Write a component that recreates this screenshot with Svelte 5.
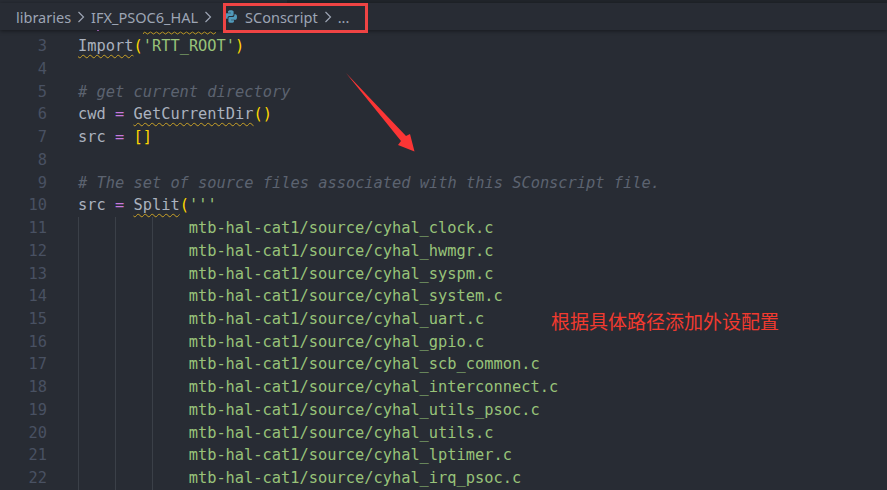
<script lang="ts">
  const cfiles = [
    'clock', 'hwmgr', 'syspm', 'system', 'uart', 'gpio', 'scb_common',
    'interconnect', 'utils_psoc', 'utils', 'lptimer', 'irq_psoc'
  ];

  const lines = [
    { n: 3, tokens: [['sq', 'Import'], ['br', '('], ['str', "'RTT_ROOT'"], ['br', ')']] },
    { n: 4, tokens: [] },
    { n: 5, tokens: [['com', '# get current directory']] },
    { n: 6, tokens: [['', 'cwd '], ['op', '='], ['', ' '], ['sq', 'GetCurrentDir'], ['br', '()']] },
    { n: 7, tokens: [['', 'src '], ['op', '='], ['', ' '], ['br', '[]']] },
    { n: 8, tokens: [] },
    { n: 9, tokens: [['com', '# The set of source files associated with this SConscript file.']] },
    { n: 10, tokens: [['', 'src '], ['op', '='], ['', ' '], ['sq', 'Split'], ['br', '('], ['str', "'''"]] },
    ...cfiles.map((f, i) => ({
      n: 11 + i,
      indent: 3,
      tokens: [['str', `mtb-hal-cat1/source/cyhal_${f}.c`]]
    }))
  ];

  // squiggle left over from the line hidden behind the breadcrumb bar
  let wave = 'M0 3';
  for (let x = 0; x < 73; x += 3) wave += ` L${x + 1.5} ${x % 6 === 0 ? 1 : 3}`;
</script>

<div class="window">
  <div class="tabs"><span class="tab-on"></span></div>
  <header class="crumbs">
    <span>libraries</span>
    <svg class="chev" viewBox="0 0 8 12"><path d="M1.5 1 L6.5 6 L1.5 11" /></svg>
    <span>IFX_PSOC6_HAL</span>
    <svg class="chev" viewBox="0 0 8 12"><path d="M1.5 1 L6.5 6 L1.5 11" /></svg>
    <svg class="py" viewBox="0 0 12 13">
      <path d="M3 3.2V1.8C3 .8 4 .3 5.8 .3S8.6 .8 8.6 1.8V4.6C8.6 5.5 8 6 7.1 6H4.4C3.3 6 2.6 6.7 2.6 7.8V8.7H1.6C.6 8.7 0 7.8 0 6.1S.6 3.2 1.6 3.2H5.9V2.7H3Z" />
      <path d="M9 9.8V11.2C9 12.2 8 12.7 6.2 12.7S3.4 12.2 3.4 11.2V8.4C3.4 7.5 4 7 4.9 7H7.6C8.7 7 9.4 6.3 9.4 5.2V4.3H10.4C11.4 4.3 12 5.2 12 6.9S11.4 9.8 10.4 9.8H6.1V10.3H9Z" />
    </svg>
    <span class="file">SConscript</span>
    <svg class="chev" viewBox="0 0 8 12"><path d="M1.5 1 L6.5 6 L1.5 11" /></svg>
    <span>...</span>
  </header>

  <div class="peek">
    <span class="tick"></span>
    <svg class="wave" viewBox="0 0 73 4"><path d={wave} /></svg>
  </div>

  <main class="code">
    {#each lines as line (line.n)}
      <div class="row">
        <span class="num">{line.n}</span>
        <span class="text">
          {#each { length: line.indent ?? 0 } as _}<span class="guide"></span>{/each}
          {#each line.tokens as [cls, t]}<span class={cls}>{t}</span>{/each}
        </span>
      </div>
    {/each}
  </main>

  <!-- annotations drawn on top of the screenshot -->
  <div class="box"></div>
  <svg class="arrow" viewBox="0 0 100 100">
    <path d="M16 13 L76 76 L80 74 L84.5 91.5 L68 85 L71 81 Z" />
  </svg>
  <div class="note">根据具体路径添加外设配置</div>
</div>

<style>
  :global(body) {
    margin: 0;
    background: #282c34;
  }

  .window {
    position: relative;
    width: 887px;
    height: 490px;
    overflow: hidden;
    background: #282c34;
    color: #abb2bf;
  }

  .tabs {
    height: 3px;
    background: #21252b;
  }
  .tab-on {
    display: block;
    width: 287px;
    height: 3px;
    background: #282c34;
  }

  .crumbs {
    display: flex;
    align-items: center;
    height: 27px;
    padding-left: 16px;
    background: #282c34;
    box-shadow: 0 1px 4px rgba(0, 0, 0, 0.45);
    font-family: "Noto Sans", "Open Sans", sans-serif;
    font-size: 14.5px;
    color: #9da5b4;
    position: relative;
  }
  .chev {
    width: 8px;
    height: 12px;
    margin: 1px 6px 0 6px;
    flex: none;
  }
  .chev path {
    fill: none;
    stroke: #9da5b4;
    stroke-width: 1.2;
  }
  .py {
    width: 12px;
    height: 13px;
    margin: 0 8px 0 7px;
    flex: none;
    fill: #519aba;
  }

  .peek {
    display: flex;
    height: 5.2px;
    padding-left: 97px;
    overflow: hidden;
  }
  .tick {
    width: 2px;
    height: 1px;
    background: #c678dd;
    margin-right: 44px;
  }
  .wave {
    width: 73px;
    height: 4px;
    margin-top: 1px;
    fill: none;
    stroke: #c9a227;
    stroke-width: 1;
  }

  .code {
    font-family: "DejaVu Sans Mono", monospace;
    font-size: 15.35px;
    line-height: 22.74px;
  }
  .row {
    display: flex;
    height: 22.74px;
    white-space: pre;
  }
  .num {
    width: 47px;
    flex: none;
    text-align: right;
    color: #495162;
  }
  .text {
    display: flex;
    padding-left: 31px;
  }
  .guide {
    flex: none;
    width: 36.9px;
    box-sizing: border-box;
    border-left: 1px solid #3b4048;
  }

  .sq {
    text-decoration: underline wavy #c9a227 1px;
    text-underline-offset: 3px;
  }
  .br {
    color: #ffd700;
  }
  .str {
    color: #98c379;
  }
  .com {
    color: #5c6370;
    font-style: italic;
  }
  .op {
    color: #c678dd;
  }

  .box {
    position: absolute;
    left: 223px;
    top: 3px;
    width: 145px;
    height: 30px;
    box-sizing: border-box;
    border: 3px solid #ef4444;
  }
  .arrow {
    position: absolute;
    left: 330px;
    top: 60px;
    width: 100px;
    height: 100px;
    fill: #fb3535;
  }
  .note {
    position: absolute;
    left: 551px;
    top: 308px;
    font-family: "Noto Sans CJK SC", sans-serif;
    font-size: 19px;
    line-height: 26px;
    color: #f23a2f;
  }
</style>
